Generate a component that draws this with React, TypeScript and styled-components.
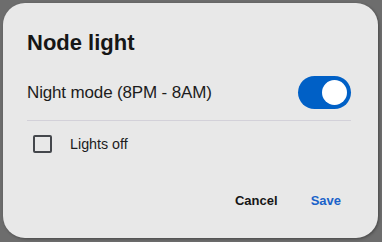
import React, { useState } from "react";
import styled, { createGlobalStyle } from "styled-components";

const GlobalStyle = createGlobalStyle`
  *, *::before, *::after {
    box-sizing: border-box;
  }

  html, body {
    margin: 0;
    padding: 0;
    background: #6d6d6d;
    font-family: "Liberation Sans", Arial, sans-serif;
  }
`;

const Page = styled.div`
  width: 382px;
  height: 242px;
  padding: 3px 4px 4px 3px;
  display: flex;
`;

const Dialog = styled.div`
  flex: 1;
  background: #e8e8e8;
  border-radius: 22px;
  box-shadow: 1px 1px 3px rgba(0, 0, 0, 0.35);
  padding: 27px 27px 0 24px;
  display: flex;
  flex-direction: column;
`;

const Title = styled.h2`
  margin: 0;
  height: 26px;
  line-height: 26px;
  font-size: 22px;
  font-weight: 700;
  color: #161616;
`;

const SettingRow = styled.div`
  margin-top: 20px;
  height: 33px;
  display: flex;
  align-items: center;
  justify-content: space-between;
`;

const SettingLabel = styled.span`
  font-size: 17px;
  letter-spacing: -0.15px;
  color: #1c1c1c;
`;

const Switch = styled.button<{ $on: boolean }>`
  width: 53px;
  height: 33px;
  border: none;
  padding: 0;
  border-radius: 17px;
  background: ${(p) => (p.$on ? "#0060c6" : "#9a9a9a")};
  display: flex;
  align-items: center;
  justify-content: ${(p) => (p.$on ? "flex-end" : "flex-start")};
  padding: 0 4px;
  cursor: pointer;
`;

const Knob = styled.span`
  width: 25px;
  height: 25px;
  border-radius: 50%;
  background: #ffffff;
`;

const Divider = styled.hr`
  margin: 11px 0 0;
  border: none;
  height: 1px;
  background: #d3d1d9;
`;

const CheckRow = styled.label`
  margin-top: 11px;
  height: 24px;
  padding-left: 6px;
  display: flex;
  align-items: center;
  gap: 18px;
  cursor: pointer;
`;

const Box = styled.span<{ $checked: boolean }>`
  width: 19px;
  height: 18px;
  border: 2px solid #44474c;
  border-radius: 2px;
  background: ${(p) => (p.$checked ? "#44474c" : "transparent")};
`;

const CheckLabel = styled.span`
  font-size: 14.3px;
  color: #1c1c1c;
`;

const Actions = styled.div`
  margin-top: 32px;
  height: 24px;
  display: flex;
  justify-content: flex-end;
  gap: 13px;
`;

const TextButton = styled.button<{ $primary?: boolean }>`
  border: none;
  background: none;
  padding: 0 10px;
  font-family: inherit;
  font-size: 13px;
  font-weight: 700;
  color: ${(p) => (p.$primary ? "#1a62c9" : "#161616")};
  cursor: pointer;
`;

const App: React.FC = () => {
  const [night, setNight] = useState(true);
  const [lightsOff, setLightsOff] = useState(false);

  return (
    <>
      <GlobalStyle />
      <Page>
        <Dialog>
          <Title>Node light</Title>
          <SettingRow>
            <SettingLabel>Night mode (8PM - 8AM)</SettingLabel>
            <Switch $on={night} onClick={() => setNight(!night)}>
              <Knob />
            </Switch>
          </SettingRow>
          <Divider />
          <CheckRow onClick={() => setLightsOff(!lightsOff)}>
            <Box $checked={lightsOff} />
            <CheckLabel>Lights off</CheckLabel>
          </CheckRow>
          <Actions>
            <TextButton>Cancel</TextButton>
            <TextButton $primary>Save</TextButton>
          </Actions>
        </Dialog>
      </Page>
    </>
  );
};

export default App;
